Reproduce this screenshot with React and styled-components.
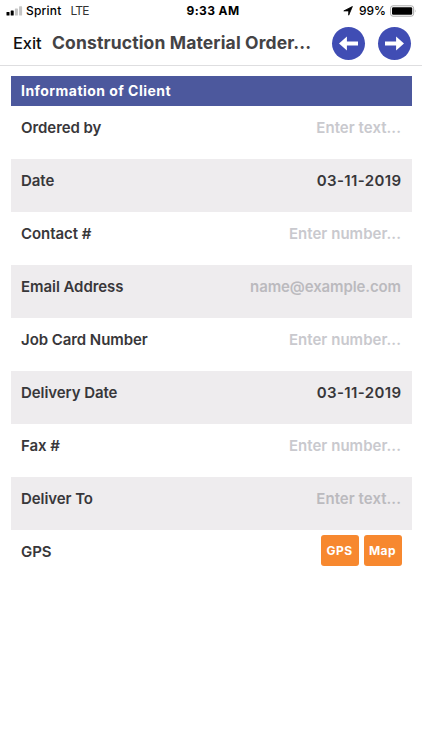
import styled, { createGlobalStyle } from "styled-components";

const GlobalStyle = createGlobalStyle`
  * {
    box-sizing: border-box;
  }
  body {
    margin: 0;
    background: #fff;
    font-family: Inter, "Liberation Sans", sans-serif;
    color: #38373a;
  }
`;

const Screen = styled.div`
  height: 750px;
  overflow: hidden;
  background: #fff;
`;

const StatusBar = styled.div`
  display: grid;
  grid-template-columns: 1fr auto 1fr;
  align-items: center;
  height: 22px;
  padding: 0 5px 0 6px;
  font-size: 12px;
  line-height: 22px;
  color: #000;
`;

const StatusGroup = styled.div`
  display: flex;
  align-items: center;
  justify-content: ${({ $end }) => ($end ? "flex-end" : "flex-start")};
`;

const Carrier = styled.span`
  margin: 0 9px 0 3px;
  font-weight: 500;
  letter-spacing: 0.2px;
`;

const Network = styled.span`
  color: #333;
  letter-spacing: -0.8px;
`;

const Clock = styled.span`
  padding-left: 3px;
  font-size: 12px;
  font-weight: 700;
  letter-spacing: 0.4px;
`;

const Percent = styled.span`
  margin: 0 4px 0 6px;
  font-weight: 500;
`;

const NavBar = styled.header`
  display: flex;
  align-items: center;
  height: 44px;
  padding: 0 11px 0 13px;
  border-bottom: 1px solid #dedee0;
`;

const ExitButton = styled.button`
  width: 39px;
  padding: 0 0 2px;
  border: 0;
  background: none;
  font: 500 16.5px/20px Inter, sans-serif;
  letter-spacing: -0.1px;
  color: #111;
  text-align: left;
`;

const Title = styled.h1`
  flex: 1;
  margin: 0;
  padding-bottom: 2px;
  font-size: 17.5px;
  font-weight: 700;
  line-height: 20px;
  letter-spacing: 0.13px;
  color: #444345;
  white-space: nowrap;
`;

const NavButtons = styled.div`
  display: flex;
  gap: 13px;
`;

const RoundButton = styled.button`
  display: flex;
  width: 33px;
  height: 33px;
  padding: 0;
  border: 0;
  border-radius: 50%;
  background: #404db4;
`;

const Form = styled.main`
  padding: 10px 10.5px 0;
`;

const SectionTitle = styled.h2`
  height: 30px;
  margin: 0;
  padding-left: 10.5px;
  background: #4c589d;
  color: #fff;
  font-size: 14px;
  font-weight: 700;
  line-height: 30px;
  letter-spacing: 0.46px;
`;

const Row = styled.div`
  display: flex;
  justify-content: space-between;
  height: 53px;
  padding: 12px 10.5px 0;
  background: ${({ $shaded }) => ($shaded ? "#eeecee" : "#fff")};
  font-size: 15px;
  font-weight: 600;
  line-height: 20px;
`;

const Label = styled.span`
  letter-spacing: -0.06px;
`;

const Value = styled.span`
  letter-spacing: 0.38px;
  margin-right: -0.5px;
`;

const Placeholder = styled.span`
  color: ${({ $shaded }) => ($shaded ? "#bbbabe" : "#c9c9ce")};
  letter-spacing: ${({ $email }) => ($email ? "-0.11px" : "0.04px")};
`;

const Actions = styled.div`
  display: flex;
  gap: 5px;
  margin: -7px -0.5px 0 0;
`;

const ActionButton = styled.button`
  width: 38px;
  height: 31px;
  padding: 0;
  border: 0;
  border-radius: 3px;
  background: #f7882f;
  color: #fff;
  font: 700 12px/31px Inter, sans-serif;
  letter-spacing: 0.45px;
`;

const fields = [
  { label: "Ordered by", placeholder: "Enter text..." },
  { label: "Date", value: "03-11-2019" },
  { label: "Contact #", placeholder: "Enter number..." },
  { label: "Email Address", placeholder: "name@example.com", email: true },
  { label: "Job Card Number", placeholder: "Enter number..." },
  { label: "Delivery Date", value: "03-11-2019" },
  { label: "Fax #", placeholder: "Enter number..." },
  { label: "Deliver To", placeholder: "Enter text..." },
];

const Signal = () => (
  <svg width="17" height="10" viewBox="0 0 17 10">
    <rect x="0.5" y="6" width="3" height="3.5" rx="0.6" fill="#000" />
    <rect x="4.7" y="4.4" width="3" height="5.1" rx="0.6" fill="#000" />
    <rect x="8.9" y="2.4" width="3" height="7.1" rx="0.6" fill="#c4c4c4" />
    <rect x="13.1" y="0.3" width="3" height="9.2" rx="0.6" fill="#c4c4c4" />
  </svg>
);

const Location = () => (
  <svg width="10" height="10" viewBox="0 0 10 10">
    <path
      d="M9.4 0.5 5.7 9.2V4.9H0.8Z"
      fill="#000"
      stroke="#000"
      strokeWidth="0.8"
      strokeLinejoin="round"
    />
  </svg>
);

const Battery = () => (
  <svg width="27" height="12" viewBox="0 0 27 12">
    <rect x="0.6" y="0.8" width="23" height="10.4" rx="2.4" fill="#fff" stroke="#aaa" />
    <rect x="2" y="2.2" width="20.2" height="7.6" rx="1.2" fill="#000" />
    <path d="M24.9 4.2q1.4 1.8 0 3.6Z" fill="#aaa" />
  </svg>
);

const Arrow = ({ back }) => (
  <svg width="33" height="33" viewBox="0 0 33 33">
    <path
      d={
        back
          ? "M26 14.6H14.9V9.4L7 16.5 14.9 23.6V18.4H26Z"
          : "M7 14.6H18.1V9.4L26 16.5 18.1 23.6V18.4H7Z"
      }
      fill="#fff"
    />
  </svg>
);

const App = () => {
  return (
    <Screen>
      <GlobalStyle />
      <StatusBar>
        <StatusGroup>
          <Signal />
          <Carrier>Sprint</Carrier>
          <Network>LTE</Network>
        </StatusGroup>
        <Clock>9:33 AM</Clock>
        <StatusGroup $end>
          <Location />
          <Percent>99%</Percent>
          <Battery />
        </StatusGroup>
      </StatusBar>
      <NavBar>
        <ExitButton>Exit</ExitButton>
        <Title>Construction Material Order...</Title>
        <NavButtons>
          <RoundButton aria-label="Back">
            <Arrow back />
          </RoundButton>
          <RoundButton aria-label="Next">
            <Arrow />
          </RoundButton>
        </NavButtons>
      </NavBar>
      <Form>
        <SectionTitle>Information of Client</SectionTitle>
        {fields.map(({ label, value, placeholder, email }, i) => (
          <Row key={label} $shaded={i % 2 === 1}>
            <Label>{label}</Label>
            {value ? (
              <Value>{value}</Value>
            ) : (
              <Placeholder $shaded={i % 2 === 1} $email={email}>
                {placeholder}
              </Placeholder>
            )}
          </Row>
        ))}
        <Row>
          <Label>GPS</Label>
          <Actions>
            <ActionButton>GPS</ActionButton>
            <ActionButton>Map</ActionButton>
          </Actions>
        </Row>
      </Form>
    </Screen>
  );
};

export default App;
